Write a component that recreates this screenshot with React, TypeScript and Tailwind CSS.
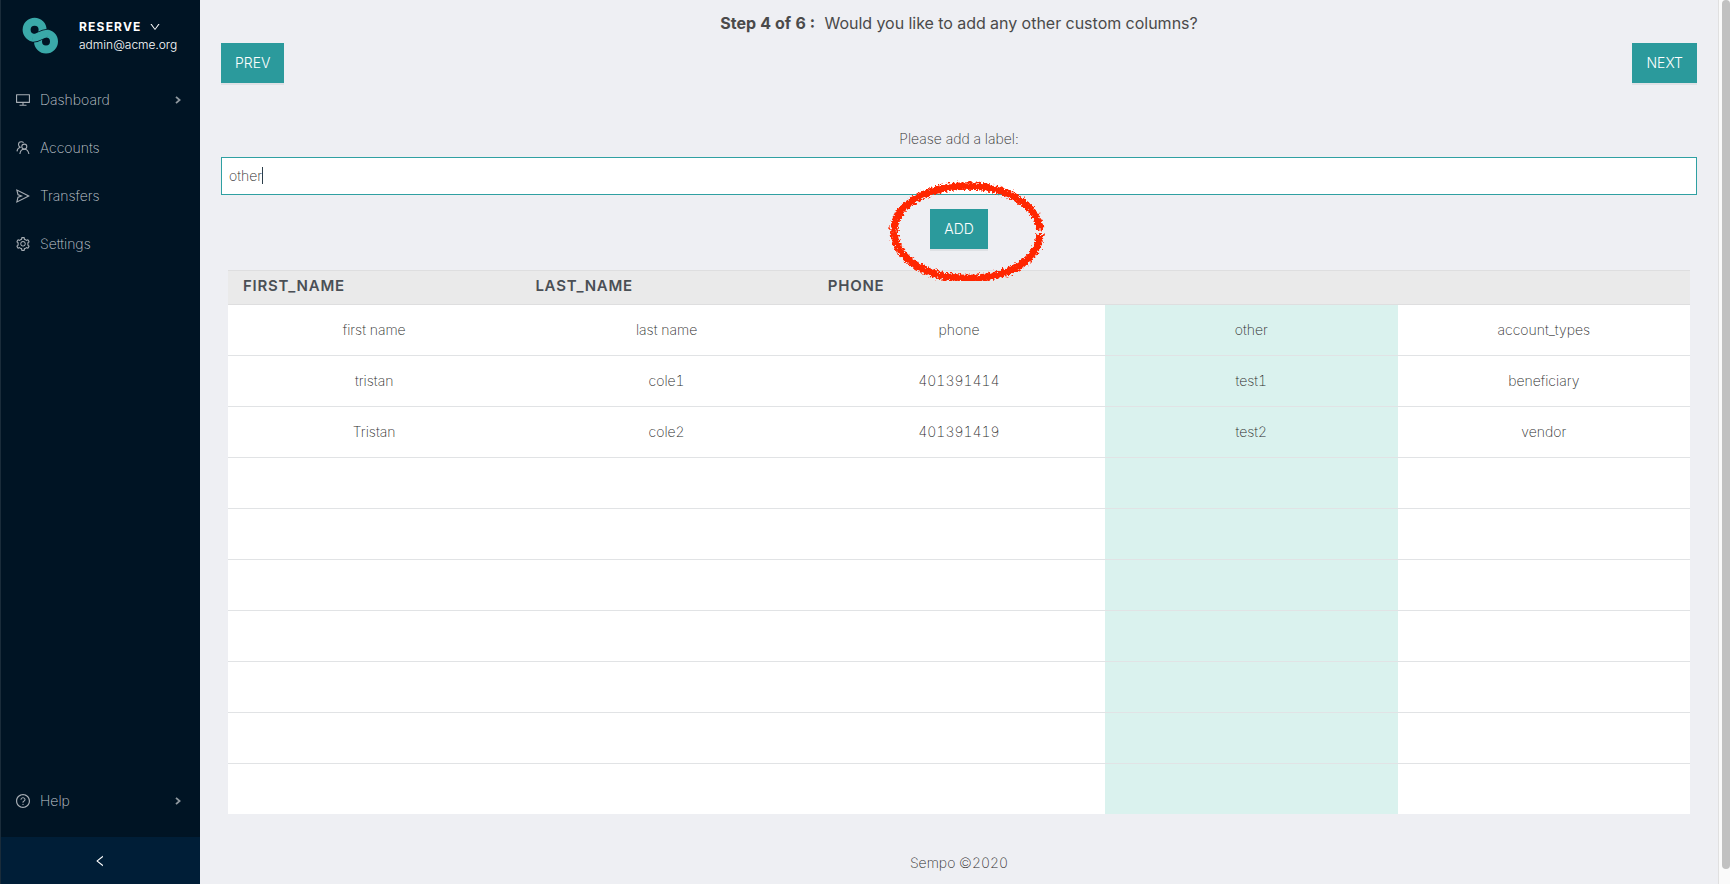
import { useId, useState } from 'react';
import type { ReactNode } from 'react';
import {
  AiOutlineDesktop,
  AiOutlineSend,
  AiOutlineSetting,
  AiOutlineQuestionCircle,
  AiOutlineDown,
  AiOutlineLeft,
} from 'react-icons/ai';

const BODY_ROWS = 10;

const columns = [
  { header: 'FIRST_NAME', cells: ['first name', 'tristan', 'Tristan'], highlight: false },
  { header: 'LAST_NAME', cells: ['last name', 'cole1', 'cole2'], highlight: false },
  { header: 'PHONE', cells: ['phone', '401391414', '401391419'], highlight: false },
  { header: '', cells: ['other', 'test1', 'test2'], highlight: true },
  { header: '', cells: ['account_types', 'beneficiary', 'vendor'], highlight: false },
];

function Logo() {
  return (
    <svg viewBox="0 0 36 37" className="h-[37px] w-9 shrink-0" aria-hidden="true">
      <g fill="none">
        <circle cx="12.6" cy="12.8" r="8" stroke="#3aa9a9" strokeWidth="8" />
        <circle cx="24" cy="24.6" r="8" stroke="#3aa9a9" strokeWidth="8" />
        <path d="M10.9 20.8 C16.900 21.7 19.400 15.800 25.7 16.700" stroke="#001424" strokeWidth="9.2" />
        <path d="M10.400 20.700 C16.900 21.7 19.400 15.800 26.2 16.800" stroke="#3aa9a9" strokeWidth="7.800" />
      </g>
    </svg>
  );
}

function AccountsIcon() {
  return (
    <svg viewBox="0 0 14 14" className="size-3.5" fill="none" stroke="currentColor" strokeWidth="1.1" aria-hidden="true">
      <circle cx="8.3" cy="5.6" r="2.5" />
      <path d="M3.9 13 C4.2 10 5.8 8.2 8.3 8.2 C10.8 8.2 12.4 10 12.9 13" />
      <path d="M7.6 1.6 C6.8 0.7 5.9 0.7 5.2 0.7 C3.6 0.7 2.5 2 2.5 3.5 C2.5 4.8 3.2 5.7 4.2 6.2 C2.4 6.8 1.2 8.2 1 10.4" />
    </svg>
  );
}

function Chevron() {
  return (
    <svg viewBox="0 0 8 8" className="size-2 text-[#8f989f]" fill="none" stroke="currentColor" strokeWidth="1.8" aria-hidden="true">
      <path d="M2 0.8 L5.6 4 L2 7.2" />
    </svg>
  );
}

function NavItem({ icon, label, expandable = false }: { icon: ReactNode; label: string; expandable?: boolean }) {
  return (
    <li>
      <a href="#" className="flex h-12 items-center pr-[18px] pl-3.5 text-sm text-[#c3cad0]">
        <span className="flex w-4 justify-center text-base text-[#a6adb4]">{icon}</span>
        <span className="ml-[9px] grow">{label}</span>
        {expandable && <Chevron />}
      </a>
    </li>
  );
}

function Sidebar() {
  return (
    <aside className="flex w-[200px] shrink-0 flex-col border-l border-[#1a2c3a] bg-[#001424]">
      <div className="flex h-[76px] items-start pt-[17px] pl-[21px]">
        <Logo />
        <button type="button" className="ml-[21px] pt-px text-left text-white">
          <span className="flex h-[18px] items-center gap-[7px] text-xs font-bold tracking-widest">
            RESERVE <AiOutlineDown className="size-3" />
          </span>
          <span className="block h-[18px] text-xs leading-[18px] font-light">admin@acme.org</span>
        </button>
      </div>
      <nav className="flex grow flex-col justify-between">
        <ul>
          <NavItem icon={<AiOutlineDesktop />} label="Dashboard" expandable />
          <NavItem icon={<AccountsIcon />} label="Accounts" />
          <NavItem icon={<AiOutlineSend />} label="Transfers" />
          <NavItem icon={<AiOutlineSetting />} label="Settings" />
        </ul>
        <ul className="pb-3">
          <NavItem icon={<AiOutlineQuestionCircle />} label="Help" expandable />
        </ul>
      </nav>
      <button type="button" aria-label="Collapse menu" className="flex h-[47px] items-center justify-center bg-[#001e37] pr-0.5 text-white">
        <AiOutlineLeft className="size-3.5" />
      </button>
    </aside>
  );
}

function ActionButton({ children }: { children: ReactNode }) {
  return (
    <button type="button" className="h-10 bg-[#2b9a9c] px-3.5 text-sm font-light text-white shadow-[0_2px_0_#dfe1e5]">
      {children}
    </button>
  );
}

function MarkerRing() {
  return (
    <svg viewBox="0 0 160 104" className="pointer-events-none absolute -top-8 -left-11 h-[104px] w-40 max-w-none" aria-hidden="true">
      <filter id="rough" x="-10%" y="-10%" width="120%" height="120%">
        <feTurbulence type="fractalNoise" baseFrequency="0.45" numOctaves="3" seed="4" result="n" />
        <feDisplacementMap in="SourceGraphic" in2="n" scale="7" xChannelSelector="R" yChannelSelector="G" />
      </filter>
      <g fill="none" stroke="#ff2600" strokeWidth="7.4" filter="url(#rough)">
        <path d="M8 55 C7 29 40 9 82 9 C122 9 152 29 154 53.500" />
        <path d="M154 57 C153 83 122 101.500 82 101.500 C42 101.500 10 83 8 55" />
      </g>
    </svg>
  );
}

function DataTable() {
  return (
    <table className="w-full table-fixed border-collapse">
      <thead>
        <tr className="h-[34px] border-y border-[#dededf] bg-[#eaeaea]">
          {columns.map((column, i) => (
            <th key={i} className="px-[15px] pb-1 text-left text-[15px] leading-5 font-semibold tracking-wider text-[#4a4f55]">
              {column.header}
            </th>
          ))}
        </tr>
      </thead>
      <tbody>
        {Array.from({ length: BODY_ROWS }, (_, row) => (
          <tr key={row} className="h-[51px] border-b border-[#e1e3e5] bg-white last:h-[50px] last:border-b-0">
            {columns.map((column, i) => (
              <td key={i} className={column.highlight ? 'bg-[#daf2ee] p-0 text-center' : 'p-0 text-center'}>
                {column.cells[row]}
              </td>
            ))}
          </tr>
        ))}
      </tbody>
    </table>
  );
}

export default function App() {
  const labelId = useId();
  const [label, setLabel] = useState('other');

  return (
    <div className="flex min-h-screen bg-[#eeeff3] font-['Inter','Liberation_Sans',sans-serif] text-sm font-extralight text-[#2e2e2e] tabular-nums">
      <Sidebar />
      <main className="flex grow flex-col px-[21px]">
        <h1 className="pt-[11px] text-center text-base leading-6 font-normal text-[#4a4a4a]">
          <strong className="mr-2.5 font-bold">Step 4 of 6 :</strong>
          Would you like to add any other custom columns?
        </h1>
        <div className="mt-2 flex justify-between">
          <ActionButton>PREV</ActionButton>
          <ActionButton>NEXT</ActionButton>
        </div>
        <label htmlFor={labelId} className="mt-[46px] text-center leading-5">
          Please add a label:
        </label>
        <div className="relative mt-2 flex">
          <input
            id={labelId}
            type="text"
            value={label}
            onChange={(e) => setLabel(e.target.value)}
            className="h-[38px] grow border border-[#2fa0a2] bg-white px-[7px] pb-0.5 outline-none"
          />
          <span className="absolute top-2.5 left-[41px] h-[17px] w-px bg-[#2c3e4a]" />
        </div>
        <div className="mt-3.5 flex justify-center">
          <div className="relative">
            <ActionButton>ADD</ActionButton>
            <MarkerRing />
          </div>
        </div>
        <div className="mt-[21px] px-[7px]">
          <DataTable />
        </div>
        <footer className="mt-auto pb-[11px] text-center leading-5">Sempo ©2020</footer>
      </main>
      <div className="flex w-3 shrink-0 flex-col border-l border-[#e0e0e0] bg-[#fafafa] pb-[15px] pl-[3px]" aria-hidden="true">
        <div className="grow rounded-full bg-[#c1c1c1]" />
      </div>
    </div>
  );
}
